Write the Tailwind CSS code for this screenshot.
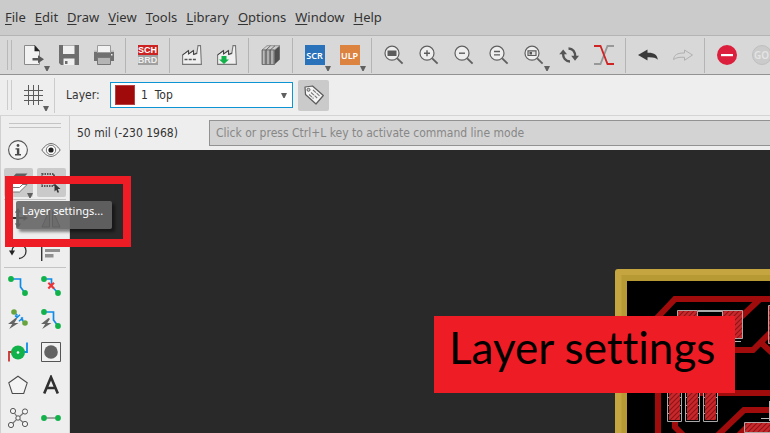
<!DOCTYPE html>
<html lang="en">
<head>
<meta charset="utf-8">
<title>Board editor</title>
<script src="https://cdn.jsdelivr.net/npm/@tailwindcss/browser@4"></script>
</head>
<body class="h-screen overflow-hidden flex flex-col bg-[#eeeeee] text-[#333333] font-['Noto_Sans',sans-serif] text-[13px]">

<svg class="hidden">
  <symbol id="lens" viewBox="0 0 20 20"><circle cx="8" cy="8.2" r="7" fill="#eeeeee" stroke="#606060" stroke-width="1.2"/><path d="M13.2 13.4 18.6 18.6" stroke="#606060" stroke-width="1.9"/></symbol>
  <symbol id="down" viewBox="0 0 6 5"><path d="M0 0H6L3.6 5H2.4Z" fill="#606060"/></symbol>
</svg>

<nav class="shrink-0 h-[35px] flex items-center gap-[9px] pl-[5px] bg-[#cbcbcb] text-[13px]">
  <button><u class="underline-offset-2">F</u>ile</button>
  <button><u class="underline-offset-2">E</u>dit</button>
  <button><u class="underline-offset-2">D</u>raw</button>
  <button><u class="underline-offset-2">V</u>iew</button>
  <button><u class="underline-offset-2">T</u>ools</button>
  <button><u class="underline-offset-2">L</u>ibrary</button>
  <button><u class="underline-offset-2">O</u>ptions</button>
  <button><u class="underline-offset-2">W</u>indow</button>
  <button><u class="underline-offset-2">H</u>elp</button>
</nav>

<div role="toolbar" aria-label="Actions" class="shrink-0 h-10 flex items-center pl-[7px] overflow-hidden bg-[#d8d8d8] border-t border-t-[#b4b4b4] border-b border-b-[#929292]">
  <div class="shrink-0 w-[5px] h-[30px] mr-1 border-x border-[#b8b8b8]"></div>
  <button aria-label="Open" class="relative shrink-0 w-[35px] h-full grid place-items-center">
    <svg class="size-5" viewBox="0 0 20 20"><path d="M.5.5H11L15.500 6V19.500H.5Z" fill="#f2f2f2" stroke="#8a8a8a"/><path d="M10.500 0 16 6.200H10.500Z" fill="#222"/><path d="M8.500 13H14V10.200L20 14.200 14 18.200V15.600H8.500Z" fill="#585858"/></svg>
    <svg class="absolute left-7 top-[30px] w-[6px] h-[5px]"><use href="#down"/></svg>
  </button>
  <button aria-label="Save" class="shrink-0 w-[35px] h-full grid place-items-center">
    <svg class="size-5" viewBox="0 0 20 20"><path d="M0 0H20V20H2L0 18Z" fill="#6e6e6e"/><path d="M4 .5H15.500V9H4Z" fill="#f0f0f0"/><path d="M4.500 13.500H15.500V20H4.500Z" fill="#f0f0f0"/><path d="M6 16H8.500V19H6Z" fill="#6e6e6e"/></svg>
  </button>
  <button aria-label="Print" class="shrink-0 w-[35px] h-full grid place-items-center">
    <svg class="size-5" viewBox="0 0 20 20"><path d="M0 6H20V16H0Z" fill="#707070"/><path d="M0 5.500H20V7H0Z" fill="#bdbdbd"/><path d="M3.500.5H16.500V7.500H3.500Z" fill="#f2f2f2" stroke="#9b9b9b"/><path d="M3.500 12.500H16.500V19.500H3.500Z" fill="#b4b4b4" stroke="#777"/><path d="M17 9h1.500v1.500H17z" fill="#eee"/></svg>
  </button>
  <div class="shrink-0 w-px h-[35px] mx-1 bg-[#b4b4b4]"></div>
  <button aria-label="Schematic / board" class="shrink-0 w-[35px] h-full grid place-items-center">
    <span class="size-5 flex flex-col text-[9px] leading-[10px] font-bold text-white font-['Liberation_Sans',sans-serif]"><span class="bg-[#cc2222]">SCH</span><span class="bg-[#a0a0a0] text-[#eeeeee]">BRD</span></span>
  </button>
  <div class="shrink-0 w-px h-[35px] mx-1 bg-[#b4b4b4]"></div>
  <button aria-label="Manufacturing" class="shrink-0 w-[35px] h-full grid place-items-center">
    <svg class="size-5" viewBox="0 0 20 20"><path d="M.6 19.400V10L6.500 5.500V9L11.500 5.500V9.500L14.800 8.500 16 .6H18.500L19.400 19.400Z" fill="#f0f0f0" stroke="#777" stroke-width="1.100"/><path d="M.5 10 6.500 5.500V9L11.500 5.500V9.500L15 8" fill="none" stroke="#444"/><path d="M2.500 14.500H14" stroke="#555" stroke-width="1.600" stroke-dasharray="3 1.200"/></svg>
  </button>
  <button aria-label="Import manufacturing" class="shrink-0 w-[35px] h-full grid place-items-center">
    <svg class="size-5" viewBox="0 0 20 20"><path d="M.6 19.400V10L6.500 5.500V9L11.500 5.500V9.500L14.800 8.500 16 .6H18.500L19.400 19.400Z" fill="#f0f0f0" stroke="#777" stroke-width="1.100"/><path d="M.5 10 6.500 5.500V9L11.500 5.500V9.500L15 8" fill="none" stroke="#444"/><path d="M4.500 11H9.500V14.500H12L7 19 2 14.500H4.500Z" fill="#12b24b"/></svg>
  </button>
  <div class="shrink-0 w-px h-[35px] mx-1 bg-[#b4b4b4]"></div>
  <button aria-label="Library manager" class="shrink-0 w-[35px] h-full grid place-items-center">
    <svg class="size-5" viewBox="0 0 20 20"><path d="M13.500 5 18.800.8V14.500L13.500 19.500Z" fill="#505050"/><path d="M1 5 6 .7H18.800L13.500 5Z" fill="#cfcfcf" stroke="#777" stroke-width=".7"/><path d="M1 5H13.500V19.500H1Z" fill="#8c8c8c" stroke="#666" stroke-width=".8"/><path d="M2.800 5.500V19M7 5.500V19M11 5.500V19" stroke="#c8c8c8" stroke-width="1.200"/><path d="M5 5 9.500.8M9.200 5 14 .8M5 5V19.500M9.200 5V19.500" stroke="#606060" stroke-width=".9"/></svg>
  </button>
  <div class="shrink-0 w-px h-[35px] mx-1 bg-[#b4b4b4]"></div>
  <button aria-label="Run script" class="relative shrink-0 w-[35px] h-full grid place-items-center">
    <span class="size-5 grid place-items-center bg-[#2a72ba] text-white text-[9px] leading-none font-semibold font-['Noto_Sans',sans-serif]">SCR</span>
    <svg class="absolute left-7 top-[30px] w-[6px] h-[5px]"><use href="#down"/></svg>
  </button>
  <button aria-label="Run ULP" class="relative shrink-0 w-[35px] h-full grid place-items-center">
    <span class="size-5 grid place-items-center bg-[#dc8340] text-white text-[9px] leading-none font-semibold font-['Noto_Sans',sans-serif]">ULP</span>
    <svg class="absolute left-7 top-[30px] w-[6px] h-[5px]"><use href="#down"/></svg>
  </button>
  <div class="shrink-0 w-px h-[35px] mx-1 bg-[#b4b4b4]"></div>
  <button aria-label="Zoom to fit" class="shrink-0 w-[35px] h-full grid place-items-center">
    <svg class="size-5" viewBox="0 0 20 20"><use href="#lens"/><path d="M3.500 5.500H12.500V11H3.500Z" fill="#5c5c5c"/></svg>
  </button>
  <button aria-label="Zoom in" class="shrink-0 w-[35px] h-full grid place-items-center">
    <svg class="size-5" viewBox="0 0 20 20"><use href="#lens"/><path d="M5 8.200H11M8 5.200V11.200" stroke="#5c5c5c" stroke-width="1.400"/></svg>
  </button>
  <button aria-label="Zoom out" class="shrink-0 w-[35px] h-full grid place-items-center">
    <svg class="size-5" viewBox="0 0 20 20"><use href="#lens"/><path d="M5 8.200H11" stroke="#5c5c5c" stroke-width="1.400"/></svg>
  </button>
  <button aria-label="Redraw" class="shrink-0 w-[35px] h-full grid place-items-center">
    <svg class="size-5" viewBox="0 0 20 20"><use href="#lens"/><path d="M5 6.500H11M5 9.800H11" stroke="#5c5c5c" stroke-width="1.300"/></svg>
  </button>
  <button aria-label="Zoom select" class="relative shrink-0 w-[35px] h-full grid place-items-center">
    <svg class="size-5" viewBox="0 0 20 20"><use href="#lens"/><path d="M4 5.800H12V10.500H4Z" fill="#ddd" stroke="#5c5c5c" stroke-width="1.200"/><path d="M5.500 7H8V9.500H5.500Z" fill="#555"/></svg>
    <svg class="absolute left-7 top-[30px] w-[6px] h-[5px]"><use href="#down"/></svg>
  </button>
  <button aria-label="Refresh" class="shrink-0 w-[35px] h-full grid place-items-center">
    <svg class="size-5" viewBox="0 0 20 20"><path d="M4 8C4 13 6.500 16.500 11 16.500M9.500 3.500C14 3.500 16.200 7 16.200 11.500" fill="none" stroke="#555" stroke-width="2.400"/><path d="M.2 9.200 4.200 4.500 8 9.200ZM12.200 10.800 16 15.800 20 10.800Z" fill="#555"/></svg>
  </button>
  <button aria-label="Switch" class="shrink-0 w-[35px] h-full grid place-items-center">
    <svg class="size-5" viewBox="0 0 20 20"><path d="M0 19H6.500L13.500 1H20" fill="none" stroke="#989898" stroke-width="1.800"/><path d="M0 1H6.500L13.500 19H20" fill="none" stroke="#cf2424" stroke-width="1.800"/></svg>
  </button>
  <div class="shrink-0 w-px h-[35px] mx-1 bg-[#b4b4b4]"></div>
  <button aria-label="Undo" class="shrink-0 w-[35px] h-full grid place-items-center">
    <svg class="size-5" viewBox="0 0 20 20"><path d="M0 10 9.500 4.500V7.800C16 7.500 19.500 10 19.800 14.800 17.500 12.500 14 12 9.500 12.300V15.600Z" fill="#3a3a3a"/></svg>
  </button>
  <button aria-label="Redo" disabled class="shrink-0 w-[35px] h-full grid place-items-center">
    <svg class="size-5" viewBox="0 0 20 20"><path d="M19.500 10 11.500 5V8C4.500 7.800 .8 10 .6 14.600 3 12.500 6.500 12 11.500 12.300V15.300Z" fill="#d8d8d8" stroke="#b0b0b0"/></svg>
  </button>
  <div class="shrink-0 w-px h-[35px] mx-1 bg-[#b4b4b4]"></div>
  <button aria-label="Stop" class="shrink-0 w-[35px] h-full grid place-items-center">
    <svg class="size-5" viewBox="0 0 20 20"><circle cx="10" cy="10" r="10" fill="#dc1f3c"/><path d="M4 9H16V11.200H4Z" fill="#fff"/></svg>
  </button>
  <button aria-label="Go" disabled class="shrink-0 w-[35px] h-full grid place-items-center">
    <span class="size-5 grid place-items-center rounded-full border border-[#bfbfbf] bg-[#cbcbcb] text-[#e4e4e4] text-[10px] leading-none font-semibold">GO</span>
  </button>
</div>

<div role="toolbar" aria-label="Parameters" class="shrink-0 h-[41px] flex items-center pl-[7px] border-b border-[#d4d4d4]">
  <div class="shrink-0 w-[5px] h-[30px] mr-1 border-x border-[#cccccc]"></div>
  <button aria-label="Grid" class="relative shrink-0 w-[35px] h-[38px] grid place-items-center">
    <svg class="size-5" viewBox="0 0 20 20"><path d="M4.500 0V20M9.500 0V20M14.500 0V20M0 5.500H19M0 10.500H19M0 15.500H19" stroke="#5a5a5a"/></svg>
    <svg class="absolute left-[27px] top-[30px] w-[6px] h-[5px]"><use href="#down"/></svg>
  </button>
  <div class="w-px h-[35px] ml-[3px] mr-[11px] bg-[#cccccc]"></div>
  <label for="layer" class="w-11 font-['DejaVu_Sans_Condensed','DejaVu_Sans',sans-serif] text-[12px]">Layer:</label>
  <div class="relative">
    <select id="layer" class="block appearance-none w-[183px] h-[26px] pl-[30px] bg-white border border-[#0d94d4] outline-none font-['DejaVu_Sans_Condensed','DejaVu_Sans',sans-serif] text-[12px]"><option>1&nbsp; Top</option></select>
    <span class="absolute left-[5px] top-[3px] size-5 bg-[#a00a0a] border border-[#b84040] pointer-events-none"></span>
    <svg class="absolute right-[6px] top-[11px] w-[6px] h-[5px] pointer-events-none"><use href="#down"/></svg>
  </div>
  <button aria-label="Tag" class="size-[31px] ml-[5px] grid place-items-center rounded-xs bg-[#cacaca]">
    <svg class="size-5" viewBox="0 0 20 20"><path d="M1 2 8.500 1 19.300 10.500 12 19 1.500 9.500Z" fill="#f4f4f4" stroke="#5c5c5c" stroke-width="1.200" stroke-linejoin="round"/><circle cx="4.500" cy="4.800" r="1.500" fill="#ccc" stroke="#555" stroke-width=".9"/><path d="M9 5 15.500 10.800M7 7.500 13.200 13M5 9.500 9.500 13.500" stroke="#777" stroke-width="1.100" stroke-dasharray="4 .8"/></svg>
  </button>
</div>

<div class="relative flex-1 min-h-0 flex">
  <aside class="shrink-0 w-[70px] pt-[7px] px-[3px] border-x border-[#d0d0d0] flex flex-col">
    <div class="shrink-0 h-[5px] mx-[5px] mb-[7px] border-y border-[#c4c4c4]"></div>
    <div class="grid grid-cols-[29px_29px] gap-1">
      <button aria-label="Info" class="size-[29px] p-1"><svg class="size-5" viewBox="0 0 20 20"><circle cx="10" cy="10" r="9.400" fill="#f4f4f4" stroke="#555" stroke-width="1.100"/><circle cx="10" cy="5.500" r="1.400" fill="#4a4a4a"/><path d="M7.500 8.200H11.300V14H13V15.500H7V14H8.900V9.600H7.500Z" fill="#4a4a4a"/></svg></button>
      <button aria-label="Show" class="size-[29px] p-1"><svg class="size-5" viewBox="0 0 20 20"><path d="M.8 10C4 5.500 7 3.600 10 3.600S16 5.500 19.200 10C16 14.500 13 16.400 10 16.400S4 14.500.8 10Z" fill="#f4f4f4" stroke="#666" stroke-width="1"/><circle cx="10" cy="10" r="4.700" fill="#fff" stroke="#666" stroke-width=".9"/><circle cx="10" cy="10" r="2.600" fill="#222"/></svg></button>
      <button aria-label="Layer settings" aria-describedby="tip" class="relative size-[29px] p-1 bg-[#cacaca] rounded-xs"><svg class="size-5" viewBox="0 0 20 20"><path d="M.8 19 8 11.500H19.200L11.500 19Z" fill="#fff" stroke="#777"/><path d="M.8 14.500 8 7H19.200L11.500 14.500Z" fill="#fff" stroke="#777"/><path d="M.5 8.500 8 .5H19.500L12 8.500Z" fill="#606060"/></svg><svg class="absolute right-0 bottom-[-1px] w-[6px] h-[5px]"><use href="#down"/></svg></button>
      <button aria-label="Group" class="size-[29px] p-1 bg-[#cacaca] rounded-xs"><svg class="size-5" viewBox="0 0 20 20"><path d="M1 1H13V13H1Z" fill="none" stroke="#333" stroke-width="1.500" stroke-dasharray="1.500 1"/><path d="M13.500 10.500 19.500 16H16.800L18 19.200 16.500 19.800 15.300 16.800 13.500 18.500Z" fill="#333"/></svg></button>
    </div>
    <div class="shrink-0 h-px mt-[2px] mb-[3px] bg-[#c4c4c4]"></div>
    <div class="grid grid-cols-[29px_29px] gap-1">
      <button aria-label="Move" class="size-[29px] p-1"><svg class="size-5" viewBox="0 0 20 20"><path d="M10 0 13 4.500H11V9H15.500V7L20 10 15.500 13V11H11V15.500H13L10 20 7 15.500H9V11H4.500V13L0 10 4.500 7V9H9V4.500H7Z" fill="#333"/></svg></button>
      <button aria-label="Mirror" class="size-[29px] p-1"><svg class="size-5" viewBox="0 0 20 20"><path d="M8.500 2V19H1ZM11.500 2V19H19Z" fill="#bbb" stroke="#444"/></svg></button>
      <button aria-label="Rotate" class="size-[29px] p-1"><svg class="size-5" viewBox="0 0 20 20"><path d="M4 10C4 2 18 1 18 10 18 14 15 17 11 17.500" fill="none" stroke="#333" stroke-width="1.300"/><path d="M1 9.500H7L4 14.500Z" fill="#222"/></svg></button>
      <button aria-label="Align" class="size-[29px] p-1"><svg class="size-5" viewBox="0 0 20 20"><path d="M.7 0V20" stroke="#333" stroke-width="1.400"/><path d="M4 8H19V11H4ZM4 13H12.500V16.500H4Z" fill="#909090"/></svg></button>
    </div>
    <div class="shrink-0 h-px mt-[2px] mb-[3px] bg-[#c4c4c4]"></div>
    <div class="grid grid-cols-[29px_29px] gap-1">
      <button aria-label="Route" class="size-[29px] p-1"><svg class="size-5" viewBox="0 0 20 20"><path d="M3 3H12.500V11L17 17" fill="none" stroke="#118ce6" stroke-width="1.700"/><circle cx="3" cy="3" r="2.900" fill="#12b24b"/><circle cx="17" cy="17" r="2.900" fill="#12b24b"/></svg></button>
      <button aria-label="Ripup" class="size-[29px] p-1"><svg class="size-5" viewBox="0 0 20 20"><path d="M3 3H10.500V10L17 17" fill="none" stroke="#118ce6" stroke-width="1.700"/><circle cx="3" cy="3" r="2.900" fill="#12b24b"/><circle cx="17" cy="17" r="2.900" fill="#12b24b"/><path d="M7.300 6.700 13 12.500M13 6.700 7.300 12.500" stroke="#ee3237" stroke-width="2.100"/></svg></button>
      <button aria-label="Route differential pair" class="size-[29px] p-1"><svg class="size-5" viewBox="0 0 20 20"><path d="M6 3 9.500 6.500M13.500 10.500 17 14M8 9.500 12 5.800M11 12.300 15 8.500M7 6.500 9.500 9M13 8.500 15 11" stroke="#118ce6" stroke-width="1.500"/><circle cx="6" cy="3" r="2.800" fill="#68a43d"/><circle cx="17" cy="14" r="2.800" fill="#68a43d"/><path d="M7.500 9 0 15H4.200L1.200 20 10.500 14H6.300L9 9.700Z" fill="#646464"/></svg></button>
      <button aria-label="Autoroute" class="size-[29px] p-1"><svg class="size-5" viewBox="0 0 20 20"><path d="M3 3H12.500V11L17 17" fill="none" stroke="#118ce6" stroke-width="1.700"/><circle cx="3" cy="3" r="2.900" fill="#12b24b"/><circle cx="17" cy="17" r="2.900" fill="#12b24b"/><path d="M7.500 9 0 15H4.200L1.200 20 10.500 14H6.300L9 9.700Z" fill="#646464"/></svg></button>
      <button aria-label="Via" class="size-[29px] p-1"><svg class="size-5" viewBox="0 0 20 20"><path d="M1 19.500V10H6" fill="none" stroke="#c83434" stroke-width="1.800"/><path d="M19 .5V10H14" fill="none" stroke="#118ce6" stroke-width="1.800"/><circle cx="10" cy="10.500" r="7" fill="#12b24b"/><circle cx="10" cy="10.500" r="1.300" fill="#fff"/></svg></button>
      <button aria-label="Hole" class="size-[29px] p-1"><svg class="size-5" viewBox="0 0 20 20"><path d="M.5.5H19.500V19.500H.5Z" fill="#f2f2f2" stroke="#555"/><circle cx="10" cy="10" r="6.800" fill="#636363"/></svg></button>
      <button aria-label="Polygon" class="size-[29px] p-1"><svg class="size-5" viewBox="0 0 20 20"><path d="M10 1.200 19.200 7.800 15.700 18.500H4.300L.8 7.800Z" fill="#f4f4f4" stroke="#4c4c4c" stroke-width="1.100"/></svg></button>
      <button aria-label="Text" class="size-[29px] p-1"><svg class="size-5" viewBox="0 0 20 20"><path d="M3.200 18.500 10 2.200 16.800 18.500M5.500 13H14.500" fill="none" stroke="#303030" stroke-width="2.600"/></svg></button>
      <button aria-label="Ratsnest" class="size-[29px] p-1"><svg class="size-5" viewBox="0 0 20 20"><path d="M5 3 10 10 17 3.500M3 17 10 10 17 16" fill="none" stroke="#777" stroke-width="1.200"/><g fill="#f4f4f4" stroke="#555"><circle cx="5" cy="3" r="2.600"/><circle cx="17" cy="3.500" r="2.600"/><circle cx="3" cy="17" r="2.600"/><circle cx="17" cy="16" r="2.600"/><circle cx="10" cy="10" r="2.200"/></g></svg></button>
      <button aria-label="Airwire" class="size-[29px] p-1"><svg class="size-5" viewBox="0 0 20 20"><path d="M3 10H17" stroke="#999" stroke-width="1.800"/><circle cx="3" cy="10" r="2.900" fill="#12b24b"/><circle cx="17" cy="10" r="2.900" fill="#12b24b"/></svg></button>
    </div>
  </aside>

  <main class="flex-1 min-w-0 flex flex-col">
    <div class="shrink-0 h-[34px] flex items-center pl-[7px] font-['DejaVu_Sans_Condensed','DejaVu_Sans',sans-serif] text-[12px]">
      <output class="shrink-0 w-[132px]">50 mil (-230 1968)</output>
      <input type="text" aria-label="Command line" placeholder="Click or press Ctrl+L key to activate command line mode" class="flex-1 min-w-0 h-[26px] px-[6px] bg-[#d3d3d3] border border-r-0 border-[#929292] placeholder:text-[#878787] outline-none">
    </div>
    <div class="relative flex-1 min-h-0 overflow-hidden bg-[#292929]">
      <svg class="absolute inset-0 size-full" viewBox="70 150 700 283" preserveAspectRatio="xMinYMin slice">
        <defs><pattern id="hatch" width="5" height="5" patternUnits="userSpaceOnUse"><path d="M0 0H5V5H0Z" fill="#c6282c"/><path d="M-1 6 6-1M-1 1 1-1M4 6 6 4" stroke="#8f1014" stroke-width="1.100"/></pattern></defs>
        <path d="M615 440V272Q615 269 618 269H780V440Z" fill="#c4a53f"/>
        <path d="M621.500 440V275H780V440Z" fill="#b89a35"/>
        <path d="M627 281H780V440H627Z" fill="#000"/>
        <g fill="none" stroke="#a00b0b" stroke-width="6">
          <path d="M658 440V317L675 299H780M760 299 740 318M730 350H753L780 323M759 341 780 360M700 393H780M717 436 744 410H780M675 418V427L685 437M735 439 750 424"/>
        </g>
        <path d="M698 311H723" stroke="#a9a9a9" stroke-width="2"/>
        <g fill="url(#hatch)" stroke="#b0a4a4">
          <path d="M677.500 310.500H697.500V338.500H677.500ZM722.500 310.500H742.500V338.500H722.500ZM768.500 305.500H780V343.500H768.500ZM744.500 422.500H780V432.500H744.500Z"/>
        </g>
        <g fill="#000" stroke="#a9a9a9"><path d="M667.500 380V421.500H681.500V380M685.500 380V421.500H699.500V380M703.500 380V421.500H717.500V380"/></g>
        <path d="M668 397.500H681M668 405.500H681M668 413.500H681M686 397.500H699M686 405.500H699M686 413.500H699M704 397.500H717M704 405.500H717M704 413.500H717" stroke="#a9a9a9"/>
        <path d="M669 380H680V420H669ZM687 380H698V420H687ZM705 380H716V420H705Z" fill="url(#hatch)"/>
        <path d="M733 341.500H741M761 418.500H770M769.500 401V421" stroke="#b8b8b8"/>
      </svg>
      <div class="absolute left-[364px] top-[166px] w-[301px] h-[77px] pl-[15px] bg-[#ee1c25] text-black whitespace-nowrap font-['Lato',sans-serif] text-[44px] leading-[62px] [font-variant-ligatures:none]">Layer settings</div>
    </div>
  </main>

  <div class="absolute left-[5px] top-[60px] w-[126px] h-[71px] border-8 border-[#ee1c25]"></div>
  <div id="tip" role="tooltip" class="absolute left-4 top-[85px] w-24 h-7 pl-[6px] rounded-xs bg-[#646464]/90 text-white text-[11px] leading-[20px] shadow-[3px_3px_3px_rgba(0,0,0,0.45)]">Layer settings...</div>
</div>
</body>
</html>
